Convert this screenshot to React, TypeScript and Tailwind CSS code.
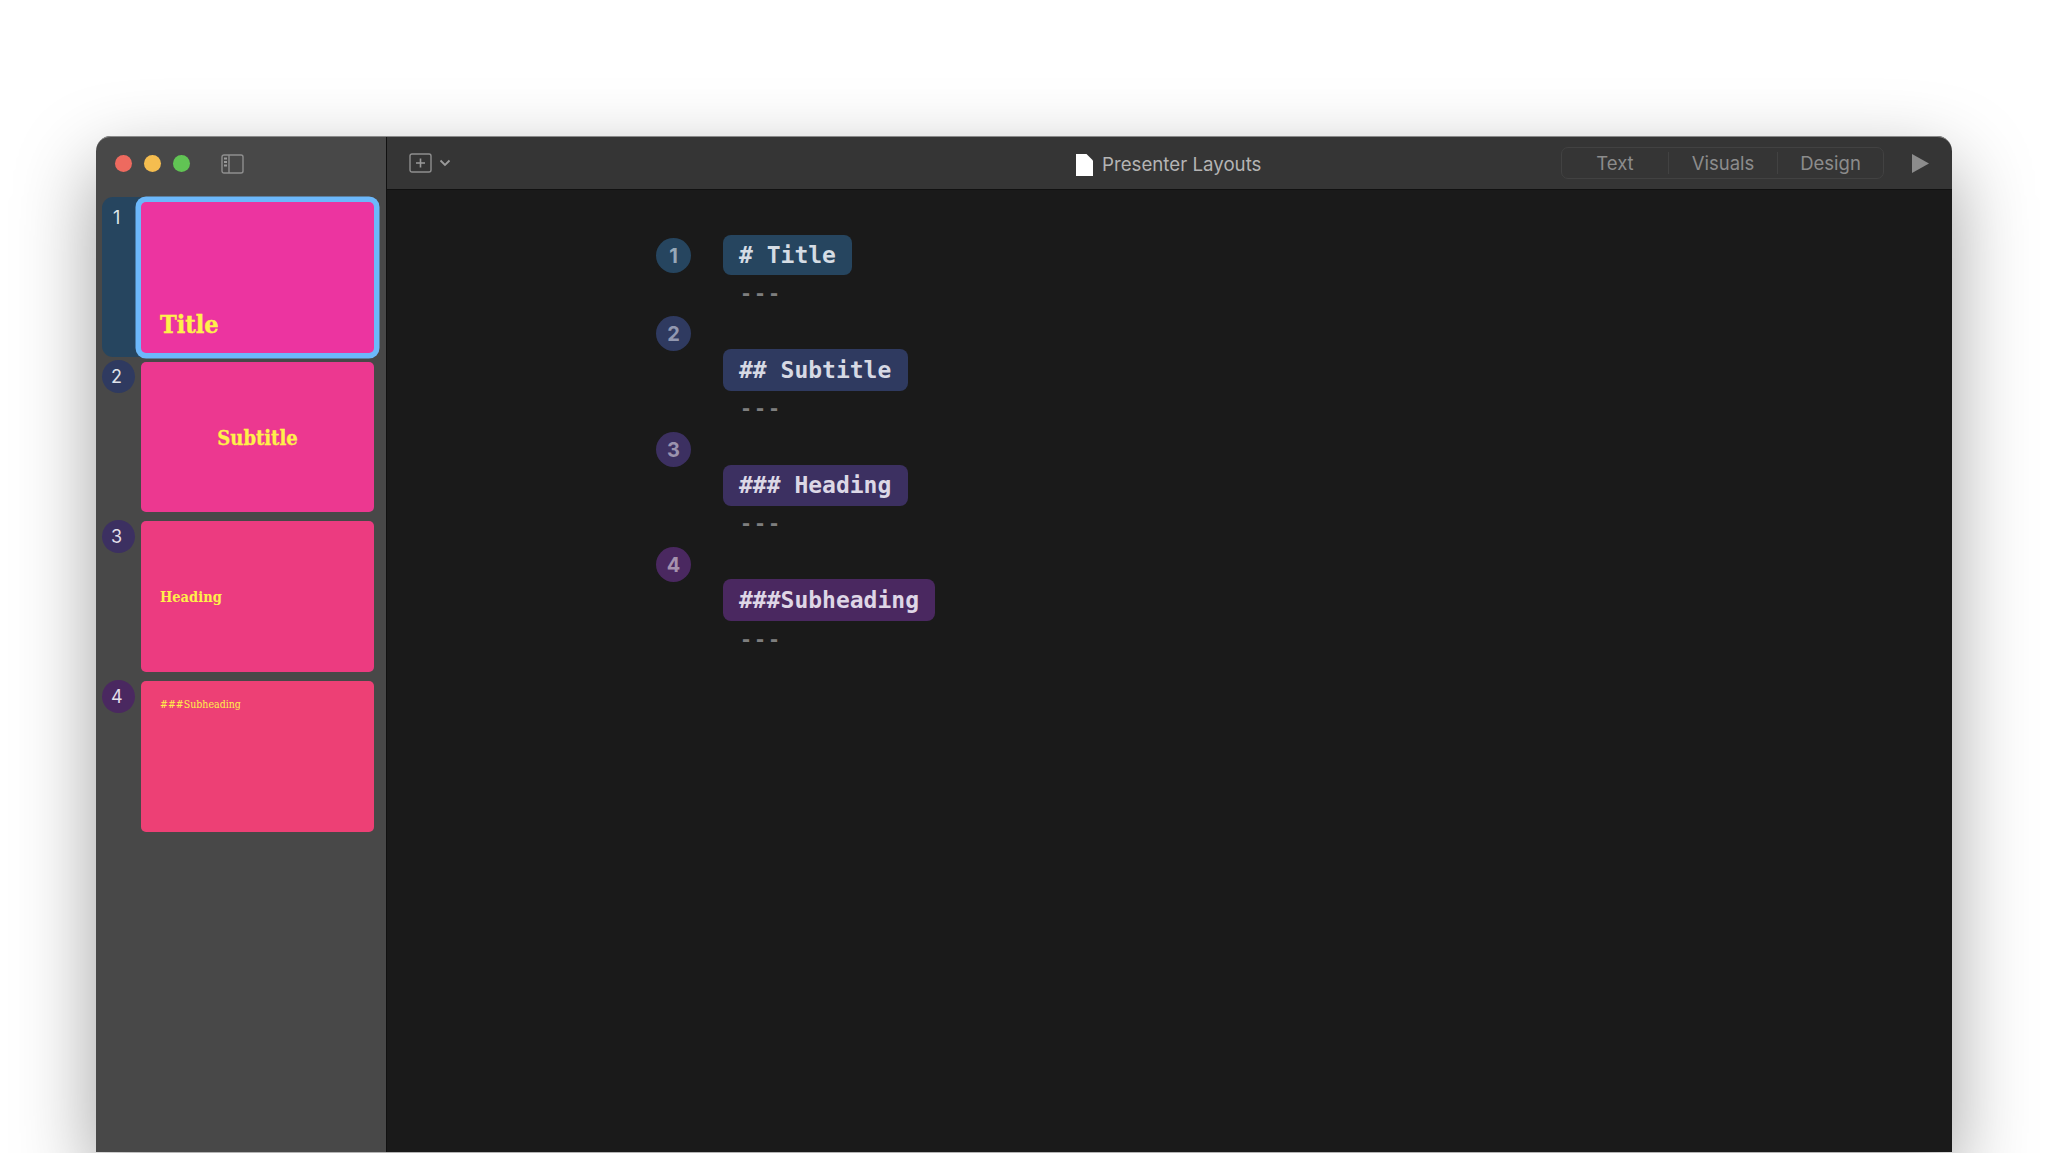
const slides = [
  { n: "1", label: "# Title", badge: "bg-[#26455f]", num: "text-[#96a8b8]", pill: "bg-[#26455f] text-[#d5dce4] w-[129px] h-[40px]", pillTop: "mt-0", dashTop: "mt-[12px]", blockH: "h-[81px]", badgeTop: "mt-[3px]" },
  { n: "2", label: "## Subtitle", badge: "bg-[#2f3a60]", num: "text-[#9298b0]", pill: "bg-[#2f3a60] text-[#d6d9e4] w-[185px] h-[42px]", pillTop: "mt-[33px]", dashTop: "mt-[11px]", blockH: "h-[116px]", badgeTop: "mt-0" },
  { n: "3", label: "### Heading", badge: "bg-[#3c3061]", num: "text-[#9b93ae]", pill: "bg-[#3c3061] text-[#dcd8e6] w-[185px] h-[41px]", pillTop: "mt-[33px]", dashTop: "mt-[11px]", blockH: "h-[115px]", badgeTop: "mt-0" },
  { n: "4", label: "###Subheading", badge: "bg-[#4a2860]", num: "text-[#a592ae]", pill: "bg-[#4a2860] text-[#ded6e6] w-[212px] h-[42px]", pillTop: "mt-[32px]", dashTop: "mt-[12px]", blockH: "h-[116px]", badgeTop: "mt-0" },
];

const SERIF = "font-['DejaVu_Serif_Condensed','DejaVu_Serif',serif]";

function Thumb({ color, className, children }: { color: string; className: string; children: React.ReactNode }) {
  return (
    <div className={`w-[233px] h-[150.7px] rounded-[5px] flex shrink-0 ${color} ${className}`}>
      {children}
    </div>
  );
}

function Sidebar() {
  return (
    <aside className="w-[291px] shrink-0 bg-[#484848] border-r border-[#111111] flex flex-col">
      <div className="h-[54px] shrink-0 flex items-center pl-[19px] pt-[1px]">
        <div className="flex gap-[12px]">
          <span className="w-[17px] h-[17px] rounded-full bg-[#ee6a5f]" />
          <span className="w-[17px] h-[17px] rounded-full bg-[#f5bd4f]" />
          <span className="w-[17px] h-[17px] rounded-full bg-[#61c454]" />
        </div>
        <svg className="ml-[31px]" width="23" height="20" viewBox="0 0 23 20" fill="none">
          <rect x="1" y="1" width="21" height="18" rx="2" stroke="#8f8f8f" strokeWidth="1.4" />
          <path d="M8 1v18" stroke="#8f8f8f" strokeWidth="1.4" />
          <path d="M3 4.5h3M3 8h3M3 11.5h3" stroke="#9a9a9a" strokeWidth="2" />
        </svg>
      </div>
      <div className="flex flex-col gap-[9px] pt-[12px] pl-[6px]">
        <div className="flex items-start">
          <div className="w-[45px] h-[160px] -mt-[5px] -mb-[4.3px] -mr-[6px] rounded-l-[11px] bg-[#26455f] shrink-0 text-[18px] leading-none text-[#dfe5ea] pl-[11px] pt-[12px] font-['Inter',sans-serif]">1</div>
          <Thumb color="bg-[#ec34a0]" className="relative ring-[5.5px] ring-[#6cb8fb] items-end pl-[19px] pb-[16px]">
            <span className={`${SERIF} font-bold text-[25px] leading-none text-[#fff04a] [-webkit-text-stroke:0.4px_#fff04a]`}>Title</span>
          </Thumb>
        </div>
        <div className="flex items-start">
          <div className="w-[33px] h-[33px] -mt-[2px] mr-[6px] rounded-full bg-[#2f3a60] shrink-0 flex items-center pl-[9px] text-[18px] text-[#dfe2ea] font-['Inter',sans-serif]">2</div>
          <Thumb color="bg-[#ec3890]" className="items-center justify-center pt-[2px]">
            <span className={`${SERIF} font-bold text-[20px] leading-none text-[#fff04a] [-webkit-text-stroke:0.3px_#fff04a]`}>Subtitle</span>
          </Thumb>
        </div>
        <div className="flex items-start">
          <div className="w-[33px] h-[33px] -mt-[1px] mr-[6px] rounded-full bg-[#3c3061] shrink-0 flex items-center pl-[9px] text-[18px] text-[#e2dfea] font-['Inter',sans-serif]">3</div>
          <Thumb color="bg-[#ec3b80]" className="items-center pl-[19px] pt-[2px]">
            <span className={`${SERIF} font-bold text-[14.5px] leading-none text-[#fff04a]`}>Heading</span>
          </Thumb>
        </div>
        <div className="flex items-start">
          <div className="w-[33px] h-[33px] -mt-[1px] mr-[6px] rounded-full bg-[#4a2860] shrink-0 flex items-center pl-[9px] text-[18px] text-[#e4deea] font-['Inter',sans-serif]">4</div>
          <Thumb color="bg-[#ed4075]" className="items-start pl-[19px] pt-[18px]">
            <span className={`${SERIF} text-[10.5px] leading-none text-[#fff04a]`}>###Subheading</span>
          </Thumb>
        </div>
      </div>
    </aside>
  );
}

function Toolbar() {
  return (
    <header className="relative h-[54px] shrink-0 bg-[#353535] border-b border-[#111111] flex items-center pl-[22px] pr-[23px]">
      <svg width="23" height="20" viewBox="0 0 23 20" fill="none">
        <rect x="1" y="1" width="21" height="18" rx="2" stroke="#8f8f8f" strokeWidth="1.4" />
        <path d="M11.5 5.5v9M7 10h9" stroke="#9a9a9a" strokeWidth="1.6" />
      </svg>
      <svg className="ml-[7px]" width="12" height="8" viewBox="0 0 12 8" fill="none">
        <path d="M1.5 1.5 6 6l4.5-4.5" stroke="#9a9a9a" strokeWidth="1.8" />
      </svg>
      <div className="absolute left-[689px] top-[16px] flex items-center gap-[9px]">
        <svg width="17" height="22" viewBox="0 0 17 22">
          <path d="M0 0h10.5L17 6.5V22H0z" fill="#ffffff" />
        </svg>
        <span className="text-[18.7px] leading-[26px] text-[#b4b4b4] font-['Inter',sans-serif]">Presenter Layouts</span>
      </div>
      <div className="ml-auto flex items-center">
        <div className="w-[323px] h-[32px] rounded-[7px] border border-[#424242] flex items-center text-[18.5px] text-[#8c8c8c] font-['Inter',sans-serif]">
          <span className="w-[107px] text-center border-r border-[#424242] leading-[22px]">Text</span>
          <span className="w-[109px] text-center border-r border-[#424242] leading-[22px]">Visuals</span>
          <span className="flex-1 text-center leading-[22px]">Design</span>
        </div>
        <svg className="ml-[28px] mt-[2px]" width="17" height="19" viewBox="0 0 17 19">
          <path d="M0 0 17 9.5 0 19z" fill="#8c8c8c" />
        </svg>
      </div>
    </header>
  );
}

function Editor() {
  return (
    <main className="flex-1 bg-[#1a1a1a] pt-[45px] pl-[269px] font-['DejaVu_Sans_Mono',monospace]">
      {slides.map((s) => (
        <section key={s.n} className={`flex items-start ${s.blockH}`}>
          <div className={`w-[35px] h-[35px] rounded-full shrink-0 flex items-center justify-center text-[20px] font-bold font-['Inter',sans-serif] ${s.badge} ${s.num} ${s.badgeTop}`}>
            {s.n}
          </div>
          <div className="ml-[32px] flex flex-col">
            <div className={`rounded-[8px] pl-[16px] flex items-center text-[23px] font-bold whitespace-pre ${s.pill} ${s.pillTop}`}>
              {s.label}
            </div>
            <div className={`ml-[17px] text-[20px] leading-[12px] text-[#7e7e7e] font-bold tracking-[2px] ${s.dashTop}`}>---</div>
          </div>
        </section>
      ))}
    </main>
  );
}

export default function App() {
  return (
    <div className="h-[1153px] bg-white overflow-hidden pt-[136px] px-[96px]">
      <div className="relative h-[1016px] flex rounded-t-[15px] shadow-[0_30px_80px_rgba(0,0,0,0.38)]">
        <div className="flex-1 flex rounded-t-[15px] overflow-hidden">
          <Sidebar />
          <div className="flex-1 flex flex-col">
            <Toolbar />
            <Editor />
          </div>
        </div>
        <div className="absolute inset-x-0 top-0 h-[15px] rounded-t-[15px] border-t border-[#8a8a8a] pointer-events-none" />
      </div>
    </div>
  );
}
